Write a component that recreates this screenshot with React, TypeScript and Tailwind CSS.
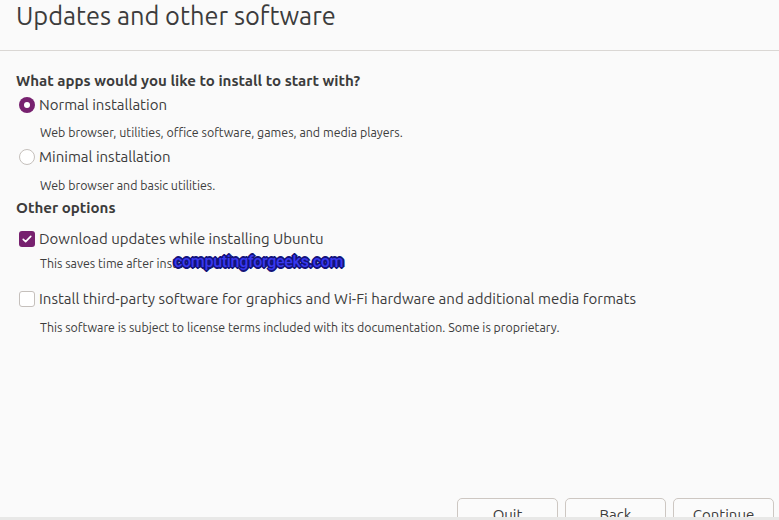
import React from 'react'

const font = { fontFamily: '"Ubuntu", "Lato", "Noto Sans", sans-serif' }

function Radio({ checked }: { checked: boolean }) {
  if (checked) {
    return (
      <span className="w-4 h-4 rounded-full bg-[#77216f] flex items-center justify-center shrink-0">
        <span className="w-[6px] h-[6px] rounded-full bg-white" />
      </span>
    )
  }
  return <span className="w-4 h-4 rounded-full bg-white border border-[#c5c0bc] shrink-0" />
}

function Checkbox({ checked }: { checked: boolean }) {
  if (checked) {
    return (
      <span className="w-4 h-4 rounded-[3px] bg-[#77216f] flex items-center justify-center shrink-0">
        <svg viewBox="0 0 16 16" className="w-3 h-3">
          <path d="M3 8.5l3.2 3L13 4.5" fill="none" stroke="white" strokeWidth="2.2" strokeLinecap="round" strokeLinejoin="round" />
        </svg>
      </span>
    )
  }
  return <span className="w-4 h-4 rounded-[3px] bg-white border border-[#c5c0bc] shrink-0" />
}

export default function App() {
  const buttons = ['Quit', 'Back', 'Continue']

  return (
    <div className="w-[779px] h-[520px] bg-[#fafafa] text-[#3c3c3c] flex flex-col overflow-hidden" style={font}>
      <div className="h-[517px] flex flex-col overflow-hidden">
        {/* Header */}
        <div className="h-[51px] shrink-0 border-b border-[#dad7d4] pl-4 pt-[1px]">
          <h1 className="text-[25.4px] leading-[30px]">Updates and other software</h1>
        </div>

        {/* Options */}
        <div className="pl-4 flex flex-col">
          <h2 className="mt-[20px] h-5 leading-5 text-[15.1px] font-bold">What apps would you like to install to start with?</h2>

          <div className="mt-[4px] h-5 flex items-center gap-[4px] pl-[3px] text-[15px]">
            <Radio checked />
            <span>Normal installation</span>
          </div>
          <p className="mt-[9px] h-4 leading-4 pl-6 text-[12.4px]">Web browser, utilities, office software, games, and media players.</p>

          <div className="mt-[7px] h-5 flex items-center gap-[4px] pl-[3px] text-[15px]">
            <Radio checked={false} />
            <span>Minimal installation</span>
          </div>
          <p className="mt-[10px] h-4 leading-4 pl-6 text-[12.4px]">Web browser and basic utilities.</p>

          <h2 className="mt-[5px] h-5 leading-5 text-[15.1px] font-bold">Other options</h2>

          <div className="mt-[11px] h-5 flex items-center gap-[4px] pl-[3px] text-[15px]">
            <Checkbox checked />
            <span>Download updates while installing Ubuntu</span>
          </div>
          <div className="relative mt-[6px] h-4">
            <p className="leading-4 pl-6 text-[12.4px]">This saves time after installation.</p>
            <span
              className="absolute left-[158px] top-[-3px] text-[16px] leading-[20px] font-medium text-[#3838ee] tracking-[-0.3px] [text-shadow:0_0_2px_#14147a,1px_1px_0_#14147a,-1px_-1px_0_#14147a,1px_-1px_0_#14147a,-1px_1px_0_#14147a,2px_0_0_#14147a,-2px_0_0_#14147a,0_2px_0_#14147a,0_-2px_0_#14147a]"
              style={{ fontFamily: 'Roboto, "Liberation Sans", sans-serif' }}
            >
              computingforgeeks.com
            </span>
          </div>

          <div className="mt-[18px] h-5 flex items-center gap-[4px] pl-[3px] text-[15px]">
            <Checkbox checked={false} />
            <span>Install third-party software for graphics and Wi-Fi hardware and additional media formats</span>
          </div>
          <p className="mt-[10px] h-4 leading-4 pl-6 text-[12.4px]">This software is subject to license terms included with its documentation. Some is proprietary.</p>
        </div>

        {/* Buttons */}
        <div className="mt-auto h-[19px] shrink-0 flex justify-end items-start gap-[7px] pr-[5px]">
          {buttons.map((b) => (
            <button
              key={b}
              className="w-[101px] h-[34px] shrink-0 rounded-[5px] border border-[#cdc7c2] bg-[#fbfbfb] text-[15px] leading-5 text-[#3c3c3c] pt-[6px] flex justify-center items-start"
            >
              {b}
            </button>
          ))}
        </div>
      </div>
      <div className="h-[3px] bg-[#e8e8e7]" />
    </div>
  )
}
